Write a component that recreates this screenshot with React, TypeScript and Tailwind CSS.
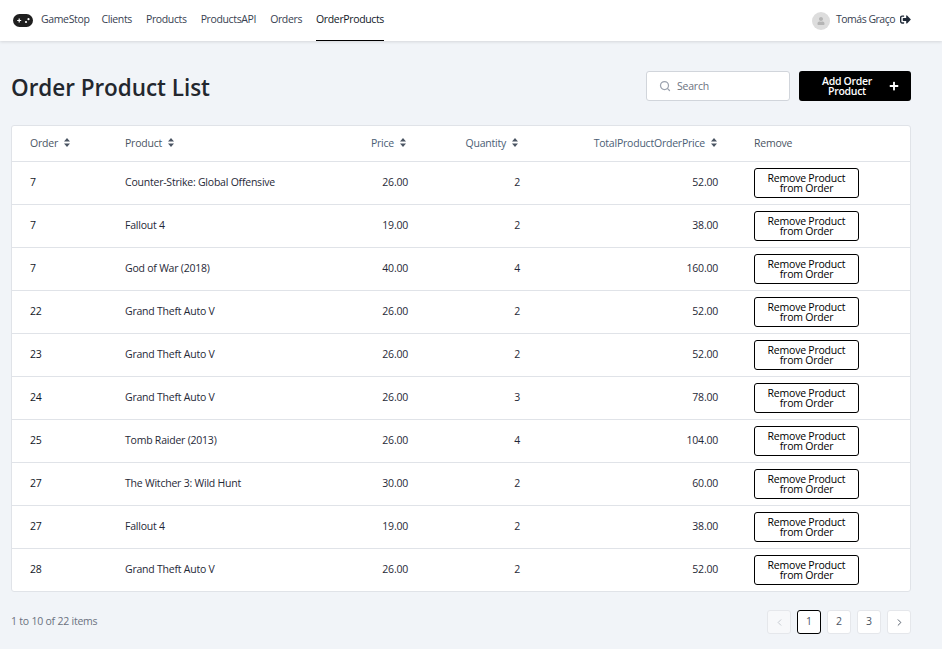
import { FaPlus, FaSignOutAlt, FaUser } from "react-icons/fa";
import { Search, ChevronLeft, ChevronRight } from "lucide-react";

const rows: [string, string, string, string, string][] = [
  ["7", "Counter-Strike: Global Offensive", "26.00", "2", "52.00"],
  ["7", "Fallout 4", "19.00", "2", "38.00"],
  ["7", "God of War (2018)", "40.00", "4", "160.00"],
  ["22", "Grand Theft Auto V", "26.00", "2", "52.00"],
  ["23", "Grand Theft Auto V", "26.00", "2", "52.00"],
  ["24", "Grand Theft Auto V", "26.00", "3", "78.00"],
  ["25", "Tomb Raider (2013)", "26.00", "4", "104.00"],
  ["27", "The Witcher 3: Wild Hunt", "30.00", "2", "60.00"],
  ["27", "Fallout 4", "19.00", "2", "38.00"],
  ["28", "Grand Theft Auto V", "26.00", "2", "52.00"],
];

function Sort() {
  return (
    <svg width="6" height="9" viewBox="0 0 6 9" className="inline-block ml-[6px] align-[0px]">
      <path d="M3 0 L6 3.4 H0 Z M0 5.6 H6 L3 9 Z" fill="#4b5563" />
    </svg>
  );
}

function Logo() {
  return (
    <svg width="20" height="13" viewBox="0 0 20 13">
      <rect x="0" y="0" width="20" height="13" rx="6.5" fill="#1f1f1f" />
      <path d="M4.2 6.5 H8.2 M6.2 4.5 V8.5" stroke="#fff" strokeWidth="1.2" />
      <circle cx="13" cy="8" r="1.1" fill="#fff" />
      <circle cx="15.5" cy="5.2" r="1.1" fill="#fff" />
    </svg>
  );
}

const nav = ["Clients", "Products", "ProductsAPI", "Orders"];

export default function App() {
  return (
    <div className="min-h-[649px] bg-[#f1f4f8] font-['Open_Sans','Noto_Sans',sans-serif] text-[10.5px] tracking-[-0.22px] text-[#1f2937]">
      <header className="h-[41px] bg-white shadow-[0_1px_3px_rgba(0,0,0,0.12)] flex items-center pl-[13px] pr-[31px] tracking-[-0.36px]">
        <Logo />
        <span className="ml-2 mr-[12px] text-[#374151] -mt-[2px]">GameStop</span>
        <nav className="flex h-full gap-[14px]">
          {nav.map((n) => (
            <a key={n} className="flex items-center text-[#374151] pb-[2px]">{n}</a>
          ))}
          <a className="flex items-center text-[#111827] border-b border-black pb-px">OrderProducts</a>
        </nav>
        <div className="ml-auto flex items-center">
          <span className="w-[18px] h-[18px] rounded-full bg-[#dddddd] flex items-center justify-center text-[#b5b5b5]">
            <FaUser size={8} />
          </span>
          <span className="ml-[6px] text-[#374151] tracking-[-0.5px] -mt-[2px]">Tomás Graço</span>
          <FaSignOutAlt size={11} className="ml-[5px] text-[#1f2937] -mt-[2px]" />
        </div>
      </header>

      <main className="pl-[11px] pr-[31px]">
        <div className="flex items-center h-[30px] mt-[30px] mb-[24px]">
          <h1 className="text-[22.5px] font-semibold text-[#23272e] tracking-[-0.05px] mt-[3px]">Order Product List</h1>
          <div className="ml-auto flex gap-[9px]">
            <label className="w-[144px] h-[30px] bg-white border border-[#d1d5db] rounded-[3px] flex items-center pl-[12px] text-[#6b7280]">
              <Search size={12} className="text-[#9ca3af]" strokeWidth={2.5} />
              <span className="ml-[6px] mt-px">Search</span>
            </label>
            <button className="w-[112px] h-[30px] bg-black text-white rounded-[3px] flex items-center justify-center font-semibold leading-[10px] tracking-[-0.3px] pl-[15px] pr-[12px]">
              <span className="flex-1 text-center">Add Order Product</span>
              <FaPlus size={10} className="ml-[9px]" />
            </button>
          </div>
        </div>

        <div className="bg-white border border-[#e0e3e8] rounded-[3px] overflow-hidden">
          <table className="w-full table-fixed border-collapse">
            <colgroup>
              <col className="w-[95px]" />
              <col className="w-[219px]" />
              <col className="w-[100px]" />
              <col className="w-[112px]" />
              <col className="w-[198px]" />
              <col />
            </colgroup>
            <thead>
              <tr className="h-[35px] text-[#4b5563] font-normal">
                <th className="pl-[18px] pt-[2px] text-left font-normal">Order<Sort /></th>
                <th className="pl-[18px] pt-[2px] text-left font-normal">Product<Sort /></th>
                <th className="pr-[20px] pt-[2px] text-right font-normal text-[#4b5e75]">Price<Sort /></th>
                <th className="pr-[20px] pt-[2px] text-right font-normal text-[#4b5e75]">Quantity<Sort /></th>
                <th className="pr-[19px] pt-[2px] text-right font-normal text-[#4b5e75]">TotalProductOrderPrice<Sort /></th>
                <th className="pl-[18px] pt-[2px] text-left font-normal">Remove</th>
              </tr>
            </thead>
            <tbody>
              {rows.map((r, i) => (
                <tr key={i} className="h-[43px] border-t border-[#e0e3e8]">
                  <td className="pl-[18px] text-[#111827]">{r[0]}</td>
                  <td className="pl-[18px]">{r[1]}</td>
                  <td className="pr-[18px] text-right">{r[2]}</td>
                  <td className="pr-[18px] text-right">{r[3]}</td>
                  <td className="pr-[18px] text-right">{r[4]}</td>
                  <td className="pl-[18px]">
                    <button className="w-[105px] h-[30px] bg-white border border-black rounded-[3px] text-black leading-[10px] flex items-center justify-center text-center px-[8px]">
                      Remove Product from Order
                    </button>
                  </td>
                </tr>
              ))}
            </tbody>
          </table>
        </div>

        <div className="flex items-center mt-[18px]">
          <span className="text-[#6b7280]">1 to 10 of 22 items</span>
          <div className="ml-auto flex gap-[6px] text-[#4b5563]">
            <button className="w-[24px] h-[24px] bg-[#f7f8fa] border border-[#e5e7eb] rounded-[3px] flex items-center justify-center text-[#c2c7ce]"><ChevronLeft size={11} /></button>
            <button className="w-[24px] h-[24px] bg-white border border-black rounded-[3px] flex items-center justify-center">1</button>
            <button className="w-[24px] h-[24px] bg-white border border-[#e5e7eb] rounded-[3px] flex items-center justify-center">2</button>
            <button className="w-[24px] h-[24px] bg-white border border-[#e5e7eb] rounded-[3px] flex items-center justify-center">3</button>
            <button className="w-[24px] h-[24px] bg-white border border-[#e5e7eb] rounded-[3px] flex items-center justify-center"><ChevronRight size={11} /></button>
          </div>
        </div>
      </main>
    </div>
  );
}
